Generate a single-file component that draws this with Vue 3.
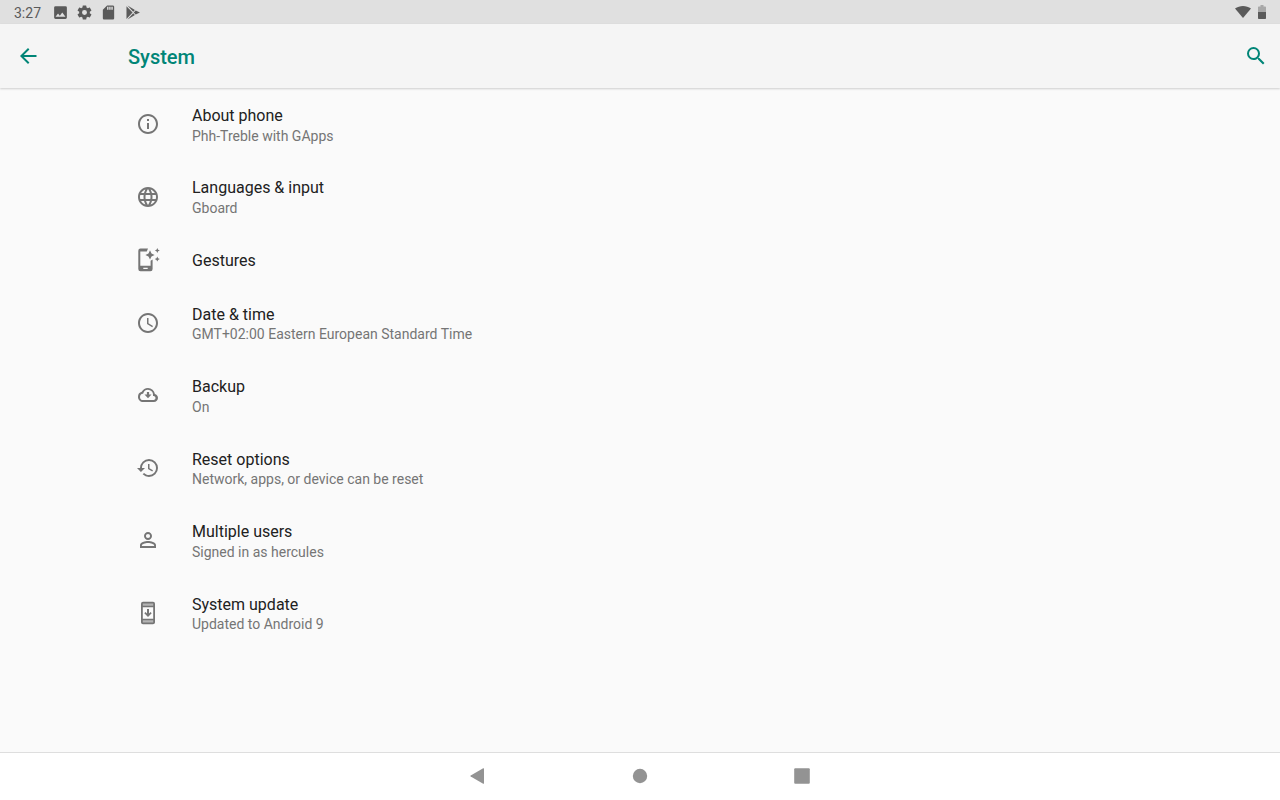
<script setup>
const items = [
  {
    title: 'About phone',
    summary: 'Phh-Treble with GApps',
    path: 'M11 7h2v2h-2zM11 11h2v6h-2zM12 2C6.48 2 2 6.48 2 12s4.48 10 10 10 10-4.48 10-10S17.52 2 12 2zm0 18c-4.41 0-8-3.59-8-8s3.59-8 8-8 8 3.59 8 8-3.59 8-8 8z'
  },
  {
    title: 'Languages & input',
    summary: 'Gboard',
    path: 'M11.99 2C6.47 2 2 6.48 2 12s4.47 10 9.99 10C17.52 22 22 17.52 22 12S17.52 2 11.99 2zm6.93 6h-2.95c-.32-1.25-.78-2.45-1.38-3.56 1.84.63 3.37 1.91 4.33 3.56zM12 4.04c.83 1.2 1.48 2.53 1.91 3.96h-3.82c.43-1.43 1.08-2.76 1.91-3.96zM4.26 14C4.1 13.36 4 12.69 4 12s.1-1.36.26-2h3.38c-.08.66-.14 1.32-.14 2s.06 1.34.14 2H4.26zm.82 2h2.95c.32 1.25.78 2.45 1.38 3.56-1.84-.63-3.37-1.9-4.33-3.56zm2.95-8H5.08c.96-1.66 2.49-2.93 4.33-3.56C8.81 5.55 8.35 6.75 8.03 8zM12 19.96c-.83-1.2-1.48-2.53-1.91-3.96h3.82c-.43 1.43-1.08 2.76-1.91 3.96zM14.34 14H9.66c-.09-.66-.16-1.32-.16-2s.07-1.35.16-2h4.68c.09.65.16 1.32.16 2s-.07 1.34-.16 2zm.25 5.56c.6-1.11 1.06-2.31 1.38-3.56h2.95c-.96 1.65-2.49 2.93-4.33 3.56zM16.36 14c.08-.66.14-1.32.14-2s-.06-1.34-.14-2h3.38c.16.64.26 1.31.26 2s-.1 1.36-.26 2h-3.38z'
  },
  {
    title: 'Gestures',
    path: 'M4.500 .5h7.500l-1.200 3H4.300v14.300h10.300v-5l2-1.300V21a2.200 2.200 0 0 1-2.200 2.200H4.500A2.200 2.200 0 0 1 2.300 21V2.700A2.200 2.200 0 0 1 4.500.5zM7.300 19.800v1.200h4.400v-1.200zM14 2.300l1.500 3.100L18.600 6.900l-3.100 1.500L14 11.500l-1.500-3.100L9.400 6.900l3.100-1.500zM21.300 0l.8 1.700 1.700.8-1.700.8-.8 1.700-.8-1.700-1.700-.8 1.700-.8zM21.300 8.600l.8 1.700 1.700.8-1.700.8-.8 1.700-.8-1.700-1.700-.8 1.700-.8z'
  },
  {
    title: 'Date & time',
    summary: 'GMT+02:00 Eastern European Standard Time',
    path: 'M11.99 2C6.47 2 2 6.48 2 12s4.47 10 9.99 10C17.52 22 22 17.52 22 12S17.52 2 11.99 2zM12 20c-4.42 0-8-3.58-8-8s3.58-8 8-8 8 3.58 8 8-3.58 8-8 8zM12.5 7H11v6l5.25 3.15.75-1.23-4.5-2.67z'
  },
  {
    title: 'Backup',
    summary: 'On',
    path: 'M18.9 11.02A6.99 6.99 0 0 0 12 5a7 7 0 0 0-6.24 3.82A5.14 5.14 0 0 0 2 13.9C2 16.7 4.3 19 7.1 19h10.8c2.3 0 4.1-1.8 4.1-4 0-2-1.3-3.6-3.1-3.98zM17.9 17H7.1A3.1 3.1 0 0 1 4 13.9c0-1.6 1.2-2.9 2.7-3.1l.4-.1.3-.8A5 5 0 0 1 17 12.1v.8h.9a2.1 2.1 0 0 1 0 4.1zM13.100 11.500V9h-2.200v2.500H8.500L12 15.300l3.500-3.800z'
  },
  {
    title: 'Reset options',
    summary: 'Network, apps, or device can be reset',
    path: 'M13 3a9 9 0 0 0-9 9H1l3.89 3.89.07.14L9 12H6c0-3.87 3.13-7 7-7s7 3.13 7 7-3.13 7-7 7c-1.93 0-3.68-.79-4.94-2.06l-1.42 1.42A8.954 8.954 0 0 0 13 21a9 9 0 0 0 0-18zm-1 5v5l4.28 2.54.72-1.21-3.5-2.08V8H12z'
  },
  {
    title: 'Multiple users',
    summary: 'Signed in as hercules',
    path: 'M12 5.9a2.1 2.1 0 1 1 0 4.2 2.1 2.1 0 0 1 0-4.2m0 9c2.97 0 6.1 1.46 6.1 2.1v1.1H5.9V17c0-.64 3.13-2.1 6.1-2.1M12 4C9.79 4 8 5.79 8 8s1.79 4 4 4 4-1.79 4-4-1.79-4-4-4zm0 9c-2.67 0-8 1.34-8 4v3h16v-3c0-2.66-5.33-4-8-4z'
  },
  {
    title: 'System update',
    summary: 'Updated to Android 9',
    shade: 'M6 2h12v4H6zM6 18h12v4H6z',
    path: 'M17 .8H7a2 2 0 0 0-2 2v18.400c0 1.100.9 2 2 2h10c1.100 0 2-.9 2-2V2.800a2 2 0 0 0-2-2zM6.800 2.400h10.400v2.400H6.800zM6.800 6.200h10.400v11.600H6.800zM6.800 19.200h10.400v2.400H6.800zM15.700 12.200l-1.200-1.200-1.500 1.500V8h-2v4.500L9.500 11l-1.200 1.200L12 16z'
  }
]
</script>

<template>
  <div class="screen">
    <div class="status">
      <span class="clock">3:27</span>
      <svg class="small" viewBox="0 0 24 24"><path d="M21 19V5a2 2 0 0 0-2-2H5a2 2 0 0 0-2 2v14c0 1.1.9 2 2 2h14c1.1 0 2-.9 2-2zM8.5 13.5l2.5 3.01L14.5 12l4.5 6H5l3.5-4.5z" /></svg>
      <svg class="small" viewBox="0 0 24 24"><path d="M19.43 12.98c.04-.32.07-.64.07-.98s-.03-.66-.07-.98l2.11-1.65c.19-.15.24-.42.12-.64l-2-3.46c-.12-.22-.39-.3-.61-.22l-2.49 1c-.52-.4-1.08-.73-1.69-.98l-.38-2.65A.488.488 0 0 0 14 2h-4c-.25 0-.46.18-.49.42l-.38 2.65c-.61.25-1.17.59-1.69.98l-2.49-1c-.23-.09-.49 0-.61.22l-2 3.46c-.13.22-.07.49.12.64l2.11 1.65c-.04.32-.07.65-.07.98s.03.66.07.98l-2.11 1.65c-.19.15-.24.42-.12.64l2 3.46c.12.22.39.3.61.22l2.49-1c.52.4 1.08.73 1.69.98l.38 2.65c.03.24.24.42.49.42h4c.25 0 .46-.18.49-.42l.38-2.65c.61-.25 1.17-.59 1.69-.98l2.49 1c.23.09.49 0 .61-.22l2-3.46c.12-.22.07-.49-.12-.64l-2.11-1.65zM12 15.5a3.5 3.5 0 1 1 0-7 3.5 3.5 0 0 1 0 7z" /></svg>
      <svg class="small" viewBox="0 0 24 24"><path d="M18 2h-8L4 8v12c0 1.1.9 2 2 2h12c1.1 0 2-.9 2-2V4c0-1.1-.9-2-2-2zm-6 6h-2V4h2v4zm3 0h-2V4h2v4zm3 0h-2V4h2v4z" /></svg>
      <svg class="small" viewBox="0 0 24 24"><path d="M3.5 3v18l8.6-9zM5 2.2l8 8.8 2.4-2.5zM5 21.8l8-8.8 2.4 2.5zM16.5 9.2L13.8 12l2.7 2.8L22.5 12z" /></svg>
      <span class="spacer"></span>
      <svg class="wifi" viewBox="0 0 16 16"><path d="M0 4.6C4.600 1 11.400 1 16 4.600L8 14z" /></svg>
      <svg class="battery" viewBox="0 0 8 14"><path class="empty" d="M2.500 0h3v1.400H7.200q.8 0 .8.800V7H0V2.200q0-.8.8-.8h1.700z" /><path d="M0 7h8v6.200q0 .8-.8.800H.8q-.8 0-.8-.8z" /></svg>
    </div>
    <header class="bar">
      <button class="action" aria-label="Navigate up">
        <svg viewBox="0 0 24 24"><path d="M20.500 11H7.830l5.590-5.590L12 4l-8 8 8 8 1.410-1.410L7.830 13H20.500v-2z" /></svg>
      </button>
      <h1>System</h1>
      <button class="action search" aria-label="Search settings">
        <svg viewBox="0 0 24 24"><path d="M15.500 14h-.79l-.28-.27A6.471 6.471 0 0 0 16 9.500 6.500 6.500 0 1 0 9.500 16c1.610 0 3.090-.59 4.230-1.570l.27.280v.790l5 4.990L20.490 19l-4.990-5zm-6 0C7.010 14 5 11.990 5 9.500S7.010 5 9.500 5 14 7.010 14 9.500 11.990 14 9.500 14z" /></svg>
      </button>
    </header>
    <main>
      <ul>
        <li v-for="item in items" :key="item.title">
          <button class="row">
            <svg viewBox="0 0 24 24">
              <path v-if="item.shade" class="shade" :d="item.shade" />
              <path fill-rule="evenodd" :d="item.path" />
            </svg>
            <span class="texts">
              <span class="title">{{ item.title }}</span>
              <span v-if="item.summary" class="summary">{{ item.summary }}</span>
            </span>
          </button>
        </li>
      </ul>
    </main>
    <nav class="nav">
      <button aria-label="Back"><svg viewBox="0 0 24 24"><path d="M18 4.800v14.400q0 .9-.8.500L4.700 12.600q-.9-.6 0-1.200L17.200 4.300q.8-.4.800.500z" /></svg></button>
      <button aria-label="Home"><svg viewBox="0 0 24 24"><circle cx="12" cy="12" r="7.200" /></svg></button>
      <button aria-label="Recent apps"><svg viewBox="0 0 24 24"><rect x="4.200" y="4.200" width="15.600" height="15.600" rx="1" /></svg></button>
    </nav>
  </div>
</template>

<style>
body {
  margin: 0;
}
</style>

<style scoped>
.screen {
  min-height: 100vh;
  display: flex;
  flex-direction: column;
  background: #fafafa;
  font-family: Roboto, "Liberation Sans", sans-serif;
  color: #212121;
}
svg {
  display: block;
  flex: none;
  fill: currentColor;
}
button {
  border: 0;
  padding: 0;
  background: none;
  color: inherit;
  font: inherit;
  cursor: pointer;
}
.status {
  display: flex;
  align-items: center;
  gap: 7px;
  height: 24px;
  padding: 0 14px;
  background: #e0e0e0;
  color: #5a5a5a;
}
.clock {
  width: 31px;
  padding-top: 2px;
  font-size: 14px;
  line-height: 22px;
}
.small {
  width: 17px;
  height: 17px;
}
.spacer {
  flex: 1;
}
.wifi {
  width: 16px;
  height: 16px;
}
.battery {
  width: 8px;
  height: 14px;
}
.empty {
  fill: #a8a8a8;
}
.bar {
  display: flex;
  align-items: center;
  height: 64px;
  background: #f5f5f5;
  color: #008577;
  box-shadow: 0 1px 2px rgba(0, 0, 0, 0.18);
}
.action {
  display: flex;
  align-items: center;
  justify-content: center;
  width: 56px;
  height: 56px;
}
.action svg {
  width: 24px;
  height: 24px;
}
.bar h1 {
  flex: 1;
  margin: 0 0 0 72px;
  padding-top: 2px;
  font-size: 20px;
  font-weight: 500;
  line-height: 24px;
}
.search {
  width: 48px;
}
main {
  flex: 1;
}
ul {
  margin: 0;
  padding: 0;
  list-style: none;
}
.row {
  display: flex;
  align-items: center;
  gap: 32px;
  width: 100%;
  padding: 15px 136px;
  line-height: 1.35;
  text-align: left;
}
.row svg {
  width: 24px;
  height: 24px;
  margin: -2px 0;
  color: #757575;
}
.shade {
  fill: #b4b4b4;
}
.texts {
  padding-top: 2px;
}
.title,
.summary {
  display: block;
}
.title {
  font-size: 16px;
}
.summary {
  font-size: 14px;
  color: #757575;
}
.nav {
  display: flex;
  align-items: center;
  justify-content: center;
  gap: 82px;
  height: 46px;
  padding-bottom: 1px;
  border-top: 1px solid #dedede;
  background: #fff;
  color: #939393;
}
.nav button {
  display: flex;
  justify-content: center;
  width: 80px;
}
.nav svg {
  width: 24px;
  height: 24px;
}
</style>
